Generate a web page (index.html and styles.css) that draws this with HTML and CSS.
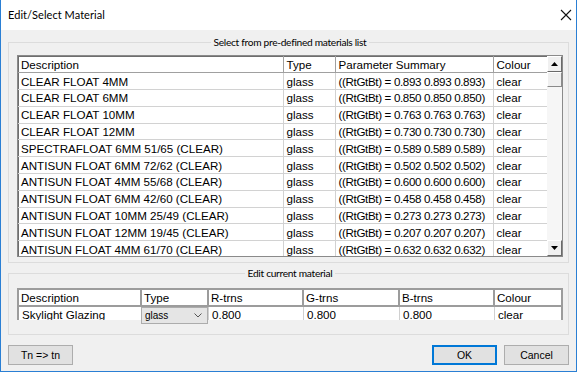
FILE: index.html
```html
<!DOCTYPE html>
<html>
<head>
<meta charset="utf-8">
<link rel="stylesheet" href="styles.css">
</head>
<body>
<div class="window">
  <div class="titlebar">
    <span class="title">Edit/Select Material</span>
    <svg class="close" width="12" height="12" viewBox="0 0 12 12"><path d="M1 1 L11 11 M11 1 L1 11" stroke="#111" stroke-width="1.1" fill="none"/></svg>
  </div>
  <div class="client">
    <fieldset class="group g1">
      <legend>Select from pre-defined materials list</legend>
      <div class="list">
        <div class="list-body">
          <table class="grid">
            <colgroup><col class="c-desc"><col class="c-type"><col class="c-param"><col class="c-colour"></colgroup>
            <thead>
              <tr><th>Description</th><th>Type</th><th>Parameter Summary</th><th>Colour</th></tr>
            </thead>
            <tbody>
              <tr><td>CLEAR FLOAT 4MM</td><td>glass</td><td class="param">((RtGtBt) = 0.893 0.893 0.893)</td><td>clear</td></tr>
              <tr><td>CLEAR FLOAT 6MM</td><td>glass</td><td class="param">((RtGtBt) = 0.850 0.850 0.850)</td><td>clear</td></tr>
              <tr><td>CLEAR FLOAT 10MM</td><td>glass</td><td class="param">((RtGtBt) = 0.763 0.763 0.763)</td><td>clear</td></tr>
              <tr><td>CLEAR FLOAT 12MM</td><td>glass</td><td class="param">((RtGtBt) = 0.730 0.730 0.730)</td><td>clear</td></tr>
              <tr><td>SPECTRAFLOAT 6MM 51/65 (CLEAR)</td><td>glass</td><td class="param">((RtGtBt) = 0.589 0.589 0.589)</td><td>clear</td></tr>
              <tr><td>ANTISUN FLOAT 6MM 72/62 (CLEAR)</td><td>glass</td><td class="param">((RtGtBt) = 0.502 0.502 0.502)</td><td>clear</td></tr>
              <tr><td>ANTISUN FLOAT 4MM 55/68 (CLEAR)</td><td>glass</td><td class="param">((RtGtBt) = 0.600 0.600 0.600)</td><td>clear</td></tr>
              <tr><td>ANTISUN FLOAT 6MM 42/60 (CLEAR)</td><td>glass</td><td class="param">((RtGtBt) = 0.458 0.458 0.458)</td><td>clear</td></tr>
              <tr><td>ANTISUN FLOAT 10MM 25/49 (CLEAR)</td><td>glass</td><td class="param">((RtGtBt) = 0.273 0.273 0.273)</td><td>clear</td></tr>
              <tr><td>ANTISUN FLOAT 12MM 19/45 (CLEAR)</td><td>glass</td><td class="param">((RtGtBt) = 0.207 0.207 0.207)</td><td>clear</td></tr>
              <tr><td>ANTISUN FLOAT 4MM 61/70 (CLEAR)</td><td>glass</td><td class="param">((RtGtBt) = 0.632 0.632 0.632)</td><td>clear</td></tr>
            </tbody>
          </table>
        </div>
        <div class="vscroll">
          <div class="sbtn"><svg width="7" height="4" viewBox="0 0 7 4"><path d="M3.5 0 L7 4 L0 4 Z" fill="#000"/></svg></div>
          <div class="thumb"></div>
          <div class="track"></div>
          <div class="sbtn"><svg width="7" height="4" viewBox="0 0 7 4"><path d="M0 0 L7 0 L3.5 4 Z" fill="#000"/></svg></div>
        </div>
      </div>
    </fieldset>

    <fieldset class="group g2">
      <legend>Edit current material</legend>
      <div class="edit-wrap">
        <table class="edit">
          <colgroup><col class="e-desc"><col class="e-type"><col class="e-r"><col class="e-g"><col class="e-b"><col class="e-colour"></colgroup>
          <thead>
            <tr><th>Description</th><th>Type</th><th>R-trns</th><th>G-trns</th><th>B-trns</th><th>Colour</th></tr>
          </thead>
          <tbody>
            <tr>
              <td><div class="cell">Skylight Glazing</div></td>
              <td class="type-cell"><div class="combo"><span>glass</span><svg width="8" height="5" viewBox="0 0 8 5"><path d="M0.5 0.5 L4 4 L7.5 0.5" stroke="#555" stroke-width="1" fill="none"/></svg></div></td>
              <td><div class="cell">0.800</div></td>
              <td><div class="cell">0.800</div></td>
              <td><div class="cell">0.800</div></td>
              <td><div class="cell">clear</div></td>
            </tr>
          </tbody>
        </table>
      </div>
    </fieldset>

    <div class="buttons">
      <button class="btn">Tn =&gt; tn</button>
      <span class="spacer"></span>
      <button class="btn default">OK</button>
      <button class="btn">Cancel</button>
    </div>
  </div>
</div>
</body>
</html>
```

FILE: styles.css
```css
html, body {
  margin: 0;
  padding: 0;
  background: #ffffff;
}

body {
  font-family: "Liberation Sans", Arial, sans-serif;
  color: #000;
}

.window {
  width: 577px;
  height: 372px;
  box-sizing: border-box;
  border: 1px solid #2a7fd4;
  border-top: none;
  background: #f0f0f0;
  display: flex;
  flex-direction: column;
}

.titlebar {
  height: 30px;
  flex: none;
  background: #ffffff;
  display: flex;
  align-items: center;
  justify-content: space-between;
  padding: 0 4px 0 7px;
}

.title {
  font-family: Lato, "Open Sans", sans-serif;
  font-size: 11px;
  letter-spacing: 0.05px;
  color: #000;
  margin-top: -1px;
}

.client {
  flex: 1;
  padding: 5px 7px 0 7px;
  display: flex;
  flex-direction: column;
}

.group {
  margin: 0;
  border: 1px solid #dcdcdc;
  min-width: 0;
}

.group legend {
  margin: 0 auto;
  padding: 0 3px;
  font-family: Lato, "Open Sans", sans-serif;
  font-size: 10.2px;
  letter-spacing: -0.3px;
  line-height: 14px;
}

.g1 {
  padding: 6px 5px 5px 8px;
}

.g2 {
  margin-top: 3px;
  padding: 8px 5px 0 8px;
  height: 69px;
  box-sizing: border-box;
}

/* list */
.list {
  display: flex;
  width: 546px;
  height: 202px;
  box-sizing: border-box;
  border: 1px solid #8a8a8a;
  box-shadow: inset 1px 1px 0 #6e6e6e;
  background: #ffffff;
}

.list-body {
  width: 529px;
  overflow: hidden;
}

.grid {
  border-collapse: collapse;
  table-layout: fixed;
  width: 529px;
  font-size: 11.6px;
}

.c-desc { width: 265px; }
.c-type { width: 52px; }
.c-param { width: 158px; }
.c-colour { width: 54px; }

.grid th,
.grid td {
  height: 16.8px;
  box-sizing: border-box;
  padding: 0 0 0 3px;
  text-align: left;
  font-weight: normal;
  white-space: nowrap;
  overflow: hidden;
  border-right: 1px solid #d2d2d2;
  border-bottom: 1px solid #d2d2d2;
  line-height: 15px;
}

.grid .param {
  letter-spacing: -0.35px;
}

.grid th {
  border-right: 1px solid #a0a0a0;
  border-bottom: 1px solid #a0a0a0;
}

.vscroll {
  width: 15px;
  display: flex;
  flex-direction: column;
  background: #f4f4f4;
}

.sbtn {
  height: 16px;
  box-sizing: border-box;
  background: #f0f0f0;
  border-top: 1px solid #ffffff;
  border-left: 1px solid #ffffff;
  border-right: 1px solid #6a6a6a;
  border-bottom: 1px solid #6a6a6a;
  display: flex;
  align-items: center;
  justify-content: center;
}

.thumb {
  height: 15px;
  box-sizing: border-box;
  background: #f0f0f0;
  border-top: 1px solid #ffffff;
  border-left: 1px solid #ffffff;
  border-right: 1px solid #8a8a8a;
  border-bottom: 1px solid #8a8a8a;
}

.track {
  flex: 1;
  background: #f6f6f6;
}

/* edit table */
.edit-wrap {
  width: 546px;
  height: 31px;
}

.edit {
  border-collapse: separate;
  border-spacing: 0;
  table-layout: fixed;
  width: 546px;
  font-size: 11.6px;
  border-top: 2px solid #9c9c9c;
  border-left: 2px solid #9c9c9c;
}

.e-desc { width: 123px; }
.e-type { width: 67px; }
.e-r { width: 95px; }
.e-g { width: 96px; }
.e-b { width: 95px; }
.e-colour { width: 68px; }

.edit th {
  height: 17px;
  box-sizing: border-box;
  padding: 0 0 0 2px;
  text-align: left;
  font-weight: normal;
  background: #ffffff;
  border-right: 2px solid #9c9c9c;
  border-bottom: 2px solid #9c9c9c;
  line-height: 15px;
  white-space: nowrap;
}

.edit td {
  padding: 0;
  background: #ffffff;
  border-right: 1px solid #d0d0d0;
  vertical-align: top;
}

.edit td:last-child {
  border-right: 2px solid #9c9c9c;
}

.cell {
  height: 13px;
  overflow: hidden;
  line-height: 15px;
  padding-left: 3px;
  white-space: nowrap;
}

.type-cell {
  position: relative;
}

.combo {
  position: absolute;
  left: -1px;
  top: 0;
  width: 67px;
  height: 17px;
  box-sizing: border-box;
  background: #e5e5e5;
  border: 1px solid #acacac;
  display: flex;
  align-items: center;
  justify-content: space-between;
  padding: 0 5px 0 3px;
  font-size: 10px;
  z-index: 2;
}

/* buttons */
.buttons {
  display: flex;
  gap: 7px;
  margin-top: 10px;
}

.spacer {
  flex: 1;
}

.btn {
  width: 65px;
  height: 20px;
  box-sizing: border-box;
  margin: 0;
  padding: 0;
  border: 1px solid #adadad;
  background: #e1e1e1;
  font-family: "Liberation Sans", Arial, sans-serif;
  font-size: 10.5px;
  color: #000;
}

.btn.default {
  border: 2px solid #0078d7;
}
```
